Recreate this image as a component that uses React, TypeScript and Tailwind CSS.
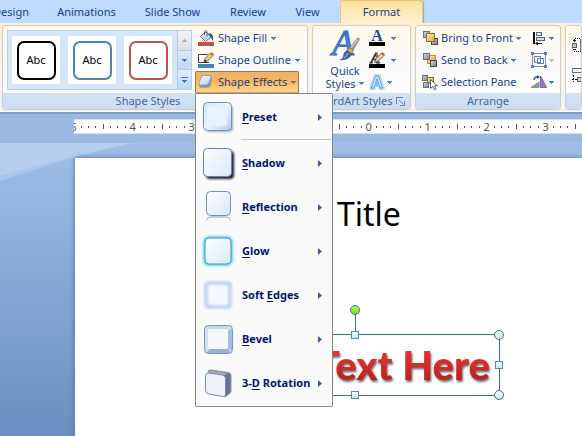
import React from "react";

const tabs = [
  { label: "Design", size: "w-[64px]" },
  { label: "Animations", size: "w-[87px]" },
  { label: "Slide Show", size: "w-[85px]" },
  { label: "Review", size: "w-[66px]" },
  { label: "View", size: "w-[53px]" },
];

const rulerMarks = [5, 4, 3, 2, 1, 0, 1, 2, 3, 4, 5, 6, 7, 8, 9, 10];

function Caret({ muted = false }: { muted?: boolean }) {
  return (
    <svg width="5" height="3" viewBox="0 0 5 3" className="shrink-0" shapeRendering="crispEdges">
      <path d="M0 0h5v1H4v1H3v1H2V2H1V1H0z" fill={muted ? "#b4b8be" : "#4a7ebb"} />
    </svg>
  );
}

function FillIcon() {
  return (
    <svg width="16" height="16" viewBox="0 0 16 16" className="shrink-0">
      <path d="M2.500 6.500 8 2l5 5-5.500 4.500z" fill="#e8f0fa" stroke="#4b5f7d" />
      <path d="M5 7.500 8.500 4.500 11 7l-3.500 3z" fill="#b8cce6" />
      <path d="M6.500 5V1.500q1.500-2 2.500 0V6" fill="none" stroke="#53657f" />
      <path d="M10.500 3c4 0 5 3 4.500 8-1.500-1-1.500-4-3-5z" fill="#38547e" />
      <rect y="12" width="16" height="4" fill="#c0504d" />
    </svg>
  );
}

function OutlineIcon() {
  return (
    <svg width="16" height="16" viewBox="0 0 16 16" className="shrink-0">
      <path d="M9.500 2.500h-9v8H11" fill="#fff" stroke="#3c3c3c" />
      <path d="M6 10 7 6.500 12.500 1 15 3.500 9.500 9z" fill="#f3cf69" stroke="#5c4a25" strokeWidth=".8" />
      <path d="M12 1.500 13.500 0 16 2.500 14.500 4z" fill="#d26058" />
      <path d="M6 10.300 6.800 7.500 9 9.300z" fill="#333" />
      <rect y="12" width="16" height="4" fill="#4f81bd" />
    </svg>
  );
}

function EffectsIcon() {
  return (
    <svg width="16" height="16" viewBox="0 0 16 16" className="shrink-0">
      <defs>
        <linearGradient id="fx" x1="0" y1="0" x2="1" y2="1">
          <stop offset="0" stopColor="#fff" />
          <stop offset="1" stopColor="#b7cbea" />
        </linearGradient>
      </defs>
      <path d="M4 4q1-2 3-2h5q2 0 2 2l-1 7q-1 3-3 3H4q-3 0-3-2z" fill="#8b7a69" opacity=".55" />
      <path d="M1 9.500q0 3.500 3 3.500h4.500q2 0 3-2L14 5l-1-1.500-3 7z" fill="#7b97c3" />
      <path d="M3.500 3q.5-1.500 2-1.500h6q2 0 1.500 2L11 9q-1 2-3 2H2.500Q.5 11 1 9z" fill="url(#fx)" stroke="#6f8fbd" strokeWidth=".7" />
    </svg>
  );
}

function QuickStylesIcon() {
  return (
    <svg width="32" height="32" viewBox="0 0 32 32" overflow="visible">
      <defs>
        <linearGradient id="bigA" x1="0" y1="0" x2="0" y2="1">
          <stop offset="0" stopColor="#3267b2" />
          <stop offset="1" stopColor="#6fa4e6" />
        </linearGradient>
      </defs>
      <text x="3" y="25" fontFamily="Liberation Serif, serif" fontSize="36" fontStyle="italic" fill="url(#bigA)" stroke="#3a6cb8" strokeWidth="1">A</text>
      <path d="M20 19 28 8.500q2-1 2.500.5L23.500 21z" fill="#9a9da3" stroke="#686a70" strokeWidth=".6" />
      <path d="M21.500 18.500 28.500 9.500" stroke="#e7e7e7" />
      <path d="m18 20 3-2.500 3.500 3L22.500 24z" fill="#d9a961" stroke="#775125" strokeWidth=".6" />
      <path d="M17.500 20.500 22.500 24q-2 6-11.500 6 4-2 3.500-5 .5-3 3-4.500z" fill="#3d68a8" stroke="#2a4c84" strokeWidth=".5" />
      <path d="M15 28q3-2 4-5" stroke="#a3c3ed" fill="none" />
    </svg>
  );
}

function TextFillIcon() {
  return (
    <svg width="16" height="16" viewBox="0 0 16 16" overflow="visible">
      <text x="8" y="11" textAnchor="middle" fontFamily="Liberation Serif, serif" fontSize="16" fontWeight="bold" fill="#1f497d">A</text>
      <rect y="12" width="16" height="4" fill="#000" />
    </svg>
  );
}

function TextOutlineIcon() {
  return (
    <svg width="16" height="16" viewBox="0 0 16 16" overflow="visible">
      <text x="6" y="11" textAnchor="middle" fontFamily="Liberation Serif, serif" fontSize="15" fontStyle="italic" fill="#fff" stroke="#333" strokeWidth=".8">A</text>
      <path d="M5.500 10.500 7 6.500 12.500 1 15 3.500 9.500 9z" fill="#e9cf98" stroke="#5c4a25" strokeWidth=".8" />
      <path d="M12 1.500 13.500 0 16 2.500 14.500 4z" fill="#c45a4a" />
      <rect y="12" width="16" height="4" fill="#000" />
    </svg>
  );
}

function TextEffectsIcon() {
  return (
    <svg width="16" height="16" viewBox="0 0 16 16" overflow="visible">
      <text x="8" y="14" textAnchor="middle" fontFamily="Liberation Sans, sans-serif" fontSize="17" fontWeight="bold" fill="none" stroke="#b5e3f8" strokeWidth="4" strokeLinejoin="round">A</text>
      <text x="8" y="14" textAnchor="middle" fontFamily="Liberation Sans, sans-serif" fontSize="17" fontWeight="bold" fill="#f5fbff" stroke="#5b9fce" strokeWidth=".9">A</text>
    </svg>
  );
}

function ArrangeDefs() {
  return (
    <defs>
      <linearGradient id="gold" x1="0" y1="0" x2="1" y2="1">
        <stop offset="0" stopColor="#fff0b8" />
        <stop offset="1" stopColor="#e5a02c" />
      </linearGradient>
      <linearGradient id="steel" x1="0" y1="0" x2="1" y2="1">
        <stop offset="0" stopColor="#d9dde4" />
        <stop offset="1" stopColor="#727b89" />
      </linearGradient>
    </defs>
  );
}

function BringFrontIcon() {
  return (
    <svg width="16" height="16" viewBox="0 0 16 16" className="shrink-0">
      <ArrangeDefs />
      <rect x="1.500" y="1.500" width="6" height="6" fill="url(#steel)" stroke="#69717d" />
      <rect x="9.500" y="8.500" width="6" height="6" fill="url(#steel)" stroke="#414853" />
      <rect x="4.500" y="3.500" width="8" height="8" fill="url(#gold)" stroke="#8b6b32" />
    </svg>
  );
}

function SendBackIcon() {
  return (
    <svg width="16" height="16" viewBox="0 0 16 16" className="shrink-0">
      <rect x="5.500" y="3.500" width="8" height="8" fill="url(#gold)" stroke="#c19444" />
      <rect x="1.500" y="1.500" width="6" height="6" fill="url(#steel)" stroke="#69717d" />
      <rect x="8.500" y="8.500" width="6" height="6" fill="url(#steel)" stroke="#414853" />
    </svg>
  );
}

function SelectionPaneIcon() {
  return (
    <svg width="16" height="16" viewBox="0 0 16 16" className="shrink-0">
      <rect x=".5" y="1.500" width="5" height="5" fill="url(#steel)" stroke="#69717d" />
      <rect x="5.500" y="3.500" width="6" height="6" fill="url(#gold)" stroke="#8b6b32" />
      <rect x="1.500" y="8.500" width="5" height="5" fill="url(#steel)" stroke="#69717d" />
      <path d="M8.500 5.500v9l2.300-2 1.500 3.200 1.700-.8-1.500-3.100h3z" fill="#fff" stroke="#3f5068" strokeWidth=".9" />
    </svg>
  );
}

function AlignIcon() {
  return (
    <svg width="16" height="16" viewBox="0 0 16 16">
      <path d="M2 2h2v12H2z" fill="#111" />
      <rect x="5.500" y="2.500" width="5" height="3" fill="#e8eef6" stroke="#53657d" />
      <rect x="5.500" y="7.500" width="8" height="3" fill="#d2dfee" stroke="#53657d" />
      <path d="M4 13.500 7 11.500v1.500h4v1H7v1.500z" fill="#111" />
    </svg>
  );
}

function GroupIcon() {
  return (
    <svg width="16" height="16" viewBox="0 0 16 16" fill="none" stroke="#7a95be" shapeRendering="crispEdges">
      <path d="M1.500 1.500h13v13h-13z" />
      <path d="M3.500 4.500h6v6h-6zM6.500 6.500h6v5h-6z" stroke="#6784b3" />
      <path d="M0 0h3v3H0zM13 0h3v3h-3zM0 13h3v3H0zM13 13h3v3h-3z" fill="#5b7eb4" stroke="none" />
    </svg>
  );
}

function RotateIcon() {
  return (
    <svg width="16" height="16" viewBox="0 0 16 16">
      <path d="M0 13.500 8 8v5.500z" fill="#8f98a5" stroke="#5d6672" strokeWidth=".6" />
      <path d="M9.500 2 15.500 13.500h-6z" fill="#9a78bd" stroke="#5d3b85" strokeWidth=".7" />
      <path d="M3 6q0-3 3.500-3" fill="none" stroke="#2b4a7c" strokeWidth="1.300" />
      <path d="m6 1 3 2-3 2z" fill="#2b4a7c" />
    </svg>
  );
}

function HeightIcon() {
  return (
    <svg width="16" height="16" viewBox="0 0 16 16" className="shrink-0" shapeRendering="crispEdges">
      <path d="M2.500 5V1.500H9M2.500 12v2.500H9" fill="none" stroke="#111" strokeDasharray="1 1" />
      <path d="M1 3h3v1H1zM1 12h3v1H1z" fill="#111" />
      <rect x=".5" y="6.500" width="4" height="4" fill="#c7ced8" stroke="#59616d" />
      <rect x="8.500" y="2.500" width="7" height="11" fill="#d9e1ec" stroke="#657184" />
    </svg>
  );
}

function WidthIcon() {
  return (
    <svg width="16" height="16" viewBox="0 0 16 16" className="shrink-0" shapeRendering="crispEdges">
      <rect x=".5" y="1.500" width="15" height="4" fill="#fff" stroke="#657184" />
      <path d="M0 1h16v1H0z" fill="#3c6cae" />
      <path d="M1.500 8v7M0 12.500h5" fill="none" stroke="#111" strokeDasharray="2 1" />
      <rect x="5.500" y="10.500" width="4" height="4" fill="#c7ced8" stroke="#59616d" />
    </svg>
  );
}

function EffectDefs() {
  return (
    <defs>
      <linearGradient id="tile" x1="0" y1="0" x2="1" y2="1">
        <stop offset="0" stopColor="#fff" />
        <stop offset="1" stopColor="#d9e7fb" />
      </linearGradient>
      <linearGradient id="glass" x1="0" y1="0" x2="1" y2="1">
        <stop offset="0" stopColor="#cfe4f7" />
        <stop offset=".5" stopColor="#e9f4fd" />
        <stop offset="1" stopColor="#b3cdea" />
      </linearGradient>
      <linearGradient id="fade" x1="0" y1="26" x2="0" y2="32" gradientUnits="userSpaceOnUse">
        <stop offset="0" stopColor="#7f9dcb" />
        <stop offset="1" stopColor="#fafafa" />
      </linearGradient>
      <filter id="soft" x="-20%" y="-20%" width="140%" height="140%">
        <feGaussianBlur stdDeviation="1.200" />
      </filter>
    </defs>
  );
}

function EffectTile({ kind }: { kind: string }) {
  return (
    <svg width="32" height="32" viewBox="0 0 32 32" className="shrink-0" overflow="visible">
      <EffectDefs />
      {kind === "preset" && (
        <>
          <rect x="4" y="4" width="27" height="27" rx="4" fill="#777" opacity=".6" filter="url(#soft)" />
          <rect x="1.500" y="1.500" width="28" height="28" rx="4" fill="url(#glass)" stroke="#6d8fbe" />
          <rect x="5" y="5" width="20" height="20" rx="3" fill="#e8f3fd" filter="url(#soft)" />
        </>
      )}
      {kind === "shadow" && (
        <>
          <rect x="4" y="4" width="28" height="28" rx="4" fill="#222" filter="url(#soft)" />
          <rect x="1.500" y="1.500" width="28" height="28" rx="4" fill="url(#tile)" stroke="#5e84bd" />
        </>
      )}
      {kind === "reflection" && (
        <>
          <rect x="4.500" y=".5" width="24" height="24" rx="4" fill="url(#tile)" stroke="#6d8fc4" />
          <path d="M4.500 32v-2q0-4 4-4h16q4 0 4 4v2" fill="none" stroke="url(#fade)" />
        </>
      )}
      {kind === "glow" && (
        <>
          <rect x="2" y="2" width="28" height="28" rx="5" fill="#5fd2fb" stroke="#5fd2fb" strokeWidth="2" filter="url(#soft)" />
          <rect x="3" y="3" width="26" height="26" rx="4" fill="url(#tile)" stroke="#4a92cc" />
        </>
      )}
      {kind === "soft" && (
        <>
          <rect x="2" y="2" width="28" height="28" rx="4" fill="#c6d6ee" filter="url(#soft)" />
          <rect x="6" y="6" width="20" height="20" rx="3" fill="#f5f9ff" filter="url(#soft)" />
        </>
      )}
      {kind === "bevel" && (
        <>
          <rect x="2.500" y="2.500" width="28" height="28" rx="4" fill="#d3e0f0" stroke="#7594bf" />
          <path d="m30 5-4 3v17l4 4z" fill="#a5bddb" />
          <path d="m4 30 4-4h18l3 4z" fill="#98b2d4" />
          <path d="M5 3h23l-3 3H8z" fill="#c7d8ec" />
          <rect x="6" y="6" width="20" height="20" rx="2" fill="#f5f9fe" />
        </>
      )}
      {kind === "rotation" && (
        <>
          <path d="M6 4.500Q7 2.500 9 3l17 2.500q3 .5 3 3V24q0 2-2 3l-4 3z" fill="#6e7685" stroke="#8396b4" />
          <path d="M8 3.500 25 6l-2 2-17-2z" fill="#a7aebb" />
          <path d="M3.500 9q0-3 3-3l14 2q3 .5 3 3.500V27q0 3-3 2.500L7 27q-3.500-.5-3.500-4z" fill="#edf3fd" stroke="#6d8fc4" />
        </>
      )}
    </svg>
  );
}

function MenuArrow() {
  return (
    <svg width="4" height="7" viewBox="0 0 4 7">
      <path d="M0 0v7l4-3.500z" fill="#4558a0" />
    </svg>
  );
}

interface MenuItemProps {
  kind: string;
  before?: string;
  hotkey: string;
  after: string;
}

function MenuItem({ kind, before = "", hotkey, after }: MenuItemProps) {
  return (
    <li role="none">
      <button role="menuitem" className="flex h-11 w-full items-center pl-1.5 pr-2.5 text-left">
        <EffectTile kind={kind} />
        <span className="ml-2 flex-1 whitespace-nowrap text-[11px] font-bold text-[#00156e]">
          {before}
          <u className="underline-offset-2">{hotkey}</u>
          {after}
        </span>
        <MenuArrow />
      </button>
    </li>
  );
}

function EffectsMenu() {
  return (
    <ul role="menu" className="absolute left-0 top-full z-20 w-[138px] rounded-[2px] border border-[#868686] bg-[#fafafa] py-px">
      <MenuItem kind="preset" hotkey="P" after="reset" />
      <li role="separator" className="ml-[45px] mr-px border-b border-t border-b-white border-t-[#c5c5c5]" />
      <MenuItem kind="shadow" hotkey="S" after="hadow" />
      <MenuItem kind="reflection" hotkey="R" after="eflection" />
      <MenuItem kind="glow" hotkey="G" after="low" />
      <MenuItem kind="soft" before="Soft " hotkey="E" after="dges" />
      <MenuItem kind="bevel" hotkey="B" after="evel" />
      <MenuItem kind="rotation" before="3-" hotkey="D" after=" Rotation" />
    </ul>
  );
}

interface RibbonGroupProps {
  title: string;
  size: string;
  launcher?: boolean;
  children: React.ReactNode;
}

function RibbonGroup({ title, size, launcher = false, children }: RibbonGroupProps) {
  return (
    <section className={`flex h-[85px] flex-col rounded-[3px] border border-[#c9cdd3] bg-gradient-to-b from-[#fffaec] via-[#fafafa] to-white ${size}`}>
      <div className="flex flex-1 pt-px">{children}</div>
      <footer className="flex h-4 items-center rounded-b-[2px] bg-gradient-to-b from-[#d3e2f5] to-[#cfdcf0] text-[11px] text-[#3e6aaa]">
        <h2 className="flex-1 whitespace-nowrap text-center">{title}</h2>
        {launcher && (
          <button aria-label={`${title} options`} className="mr-0.5 w-3">
            <svg width="9" height="9" viewBox="0 0 9 9" fill="none" stroke="#6b87b0" shapeRendering="crispEdges">
              <path d="M.5 7V.5H7M8.500 4v4.500H4M3.500 3.500l4 4" />
            </svg>
          </button>
        )}
      </footer>
    </section>
  );
}

function StyleSwatch({ color }: { color: string }) {
  return (
    <button className="flex size-12 items-center justify-center bg-white">
      <span className={`flex size-[39px] items-center justify-center rounded-[7px] border-2 text-[11px] text-black ${color}`}>Abc</span>
    </button>
  );
}

function ShapeStyles() {
  return (
    <RibbonGroup title="Shape Styles" size="w-[306px] shrink-0" launcher>
      <div className="ml-1 mt-[3px] flex h-[60px] w-[185px] border border-[#b9cfed] bg-[#d5e5f7]">
        <div className="flex flex-1 items-center gap-2 pl-1">
          <StyleSwatch color="border-black" />
          <StyleSwatch color="border-[#4f81bd]" />
          <StyleSwatch color="border-[#c0504d]" />
        </div>
        <div className="flex w-[14px] flex-col divide-y divide-[#b3cae8] border-l border-[#b3cae8]">
          <button aria-label="Previous styles" className="flex flex-1 items-center justify-center bg-gradient-to-b from-[#f2f2f2] to-[#dfe1e4]">
            <svg width="5" height="3" viewBox="0 0 5 3"><path d="M0 3 2.500 0 5 3z" fill="#a5a9af" /></svg>
          </button>
          <button aria-label="Next styles" className="flex flex-1 items-center justify-center bg-gradient-to-b from-[#dfebf9] to-[#bfd6f3]">
            <Caret />
          </button>
          <button aria-label="More styles" className="flex flex-1 flex-col items-center justify-center gap-0.5 bg-gradient-to-b from-[#dfebf9] to-[#bfd6f3]">
            <span className="h-px w-[7px] bg-[#4a7ebb]" />
            <Caret />
          </button>
        </div>
      </div>
      <div className="ml-[3px] flex flex-col items-start text-[11px] text-[#15428b]">
        <button className="flex h-[22px] items-center gap-1 whitespace-nowrap pl-[3px]">
          <FillIcon /> Shape Fill <Caret />
        </button>
        <button className="flex h-[22px] items-center gap-1 whitespace-nowrap pl-[3px]">
          <OutlineIcon /> Shape Outline <Caret />
        </button>
        <div className="relative">
          <button
            aria-haspopup="menu"
            aria-expanded="true"
            className="flex h-[22px] w-[104px] items-center gap-1 whitespace-nowrap rounded-t-[2px] border border-[#8e7b5a] border-b-[#c9a263] bg-gradient-to-b from-[#e9b26c] via-[#fdb755] to-[#ffd795] pl-0.5"
          >
            <EffectsIcon /> Shape Effects <Caret />
          </button>
          <EffectsMenu />
        </div>
      </div>
    </RibbonGroup>
  );
}

function WordArtStyles() {
  return (
    <RibbonGroup title="WordArt Styles" size="w-[99px] shrink-0" launcher>
      <button className="ml-2.5 flex w-11 flex-col items-center pt-[3px] text-[11px] leading-[13px] text-[#15428b]">
        <QuickStylesIcon />
        <span className="mt-0.5">Quick</span>
        <span className="flex items-center gap-1">Styles <Caret /></span>
      </button>
      <div className="ml-0.5 flex flex-col">
        <button aria-label="Text Fill" className="flex h-[22px] items-center gap-1.5"><TextFillIcon /><Caret /></button>
        <button aria-label="Text Outline" className="flex h-[22px] items-center gap-1.5"><TextOutlineIcon /><Caret /></button>
        <button aria-label="Text Effects" className="flex h-[22px] items-center gap-0.5"><TextEffectsIcon /><Caret /></button>
      </div>
    </RibbonGroup>
  );
}

function Arrange() {
  return (
    <RibbonGroup title="Arrange" size="w-[146px] shrink-0">
      <div className="ml-1.5 flex flex-1 flex-col items-start text-[11px] text-[#15428b]">
        <button className="flex h-[22px] items-center gap-[3px] whitespace-nowrap"><BringFrontIcon /> Bring to Front <Caret /></button>
        <button className="flex h-[22px] items-center gap-[3px] whitespace-nowrap"><SendBackIcon /> Send to Back <Caret /></button>
        <button className="flex h-[22px] items-center gap-[3px] whitespace-nowrap"><SelectionPaneIcon /> Selection Pane</button>
      </div>
      <div className="mr-1.5 flex flex-col">
        <button aria-label="Align" className="flex h-[22px] items-center gap-0.5"><AlignIcon /><Caret /></button>
        <button aria-label="Group" className="flex h-[22px] items-center gap-0.5" disabled><GroupIcon /><Caret muted /></button>
        <button aria-label="Rotate" className="flex h-[22px] items-center gap-0.5"><RotateIcon /><Caret /></button>
      </div>
    </RibbonGroup>
  );
}

function Ruler() {
  return (
    <div className="ml-[74px] flex h-[15px] overflow-hidden border-y border-[#d5dff0] bg-white text-[#4c535c]">
      <div className="-ml-1 flex">
        {rulerMarks.map((mark, i) => (
          <div key={i} className="grid w-[59px] shrink-0 grid-cols-8 items-center justify-items-center">
            <span className="text-[11px] leading-[13px]">{mark}</span>
            <i className="h-0.5 w-px bg-current" />
            <i className="h-0.5 w-px bg-current" />
            <i className="h-0.5 w-px bg-current" />
            <i className="h-[5px] w-px bg-current" />
            <i className="h-0.5 w-px bg-current" />
            <i className="h-0.5 w-px bg-current" />
            <i className="h-0.5 w-px bg-current" />
          </div>
        ))}
      </div>
    </div>
  );
}

function WordArtBox() {
  const square = "absolute size-2 border border-[#5f86b0] bg-gradient-to-b from-[#f2fdff] to-[#c3ebf3]";
  const round = "absolute size-[10px] rounded-full border border-[#5d6b76] bg-gradient-to-b from-[#f4feff] to-[#bfe4ea]";
  return (
    <div className="absolute left-[135px] top-[176px] flex h-[62px] w-[290px] items-center justify-end border border-[#41689a] pr-[9px]">
      <p className="whitespace-nowrap bg-gradient-to-b from-[#e8322e] from-30% to-[#b3201f] to-80% bg-clip-text font-[Lato,sans-serif] text-[40px] font-black leading-[60px] text-transparent drop-shadow-[1px_2px_1px_rgba(0,0,0,0.6)]">
        Text Here
      </p>
      <span className="absolute -top-[21px] left-1/2 h-[18px] w-px bg-[#41689a]" />
      <span className="absolute -top-[30px] left-1/2 size-[10px] -translate-x-1/2 rounded-full border border-[#5d6b56] bg-gradient-to-b from-[#b4f56c] to-[#6fdc1c]" />
      <span className={`${square} -top-1 left-1/2 -translate-x-1/2`} />
      <span className={`${square} -bottom-1 left-1/2 -translate-x-1/2`} />
      <span className={`${square} -right-1 top-1/2 -translate-y-1/2`} />
      <span className={`${round} -right-[5px] -top-[5px]`} />
      <span className={`${round} -bottom-[5px] -right-[5px]`} />
    </div>
  );
}

export default function App() {
  return (
    <div className="flex h-screen flex-col overflow-hidden bg-[#9ab9e0] font-['Noto_Sans',sans-serif]">
      <nav className="flex h-[23px] shrink-0 bg-[#bfdbff] text-[11px] text-[#15428b]">
        <div className="-ml-[21px] flex">
          {tabs.map((tab) => (
            <button key={tab.label} className={`whitespace-nowrap pt-0.5 ${tab.size}`}>{tab.label}</button>
          ))}
        </div>
        <button className="ml-1.5 h-6 w-[83px] rounded-t-[3px] border border-b-0 border-[#e8c77c] bg-gradient-to-b from-[#fbe09c] to-[#fff3d3] shadow-[1px_0_1px_#8fabd0]">
          Format
        </button>
      </nav>

      <div className="flex shrink-0 gap-1 border-b border-white bg-gradient-to-b from-[#ffefc9] via-[#fbf6ec] to-[#f1f1f1] pb-px pl-0.5 pt-0.5">
        <ShapeStyles />
        <WordArtStyles />
        <Arrange />
        <RibbonGroup title="" size="min-w-0 flex-1">
          <div className="ml-1.5 flex flex-col gap-3.5 overflow-hidden pt-2.5">
            <HeightIcon />
            <WidthIcon />
          </div>
        </RibbonGroup>
      </div>

      <div className="h-[31px] shrink-0 border-t-2 border-[#7d9dc7] pt-[5px]">
        <Ruler />
      </div>

      <main className="relative flex-1 bg-gradient-to-b from-[#9fbfe8] to-[#6a8fc0] pl-[75px] pt-[15px]">
        <svg width="135" height="40" viewBox="0 0 135 40" className="absolute left-0 top-0">
          <path d="M0 0h133Q70 14 0 38z" fill="#a9c5ea" />
          <path d="M0 0h131Q70 13 0 33z" fill="#b6ceed" />
        </svg>
        <div className="relative h-full bg-white shadow-[0_0_5px_#4c6d9a]">
          <h1 className="absolute left-[262px] top-9 text-[32px] leading-10 text-black">Title</h1>
          <WordArtBox />
        </div>
      </main>
    </div>
  );
}
